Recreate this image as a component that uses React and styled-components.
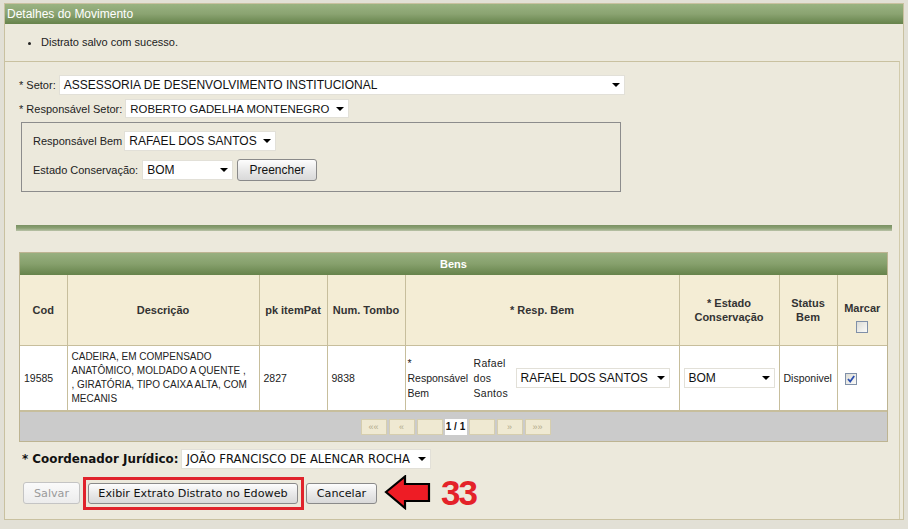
import React from "react";
import styled, { createGlobalStyle } from "styled-components";

const Global = createGlobalStyle`
  html, body { margin: 0; padding: 0; }
  body { background: #e2e0d6; font-family: "Liberation Sans", Arial, sans-serif; }
`;

const Page = styled.div`
  width: 908px;
  height: 529px;
  box-sizing: border-box;
  padding: 3px 4px 0 4px;
  overflow: hidden;
  background: #e2e0d6;
`;

const Dialog = styled.div`
  width: 900px;
  height: 517px;
  box-sizing: border-box;
  background: #ece9dc;
  border: 1px solid #c9c1a0;
  display: flex;
  flex-direction: column;
  overflow: hidden;
`;

const TitleBar = styled.div`
  flex: none;
  height: 20px;
  line-height: 20px;
  padding-left: 2px;
  color: #fff;
  font-size: 12px;
  background: linear-gradient(#9ab382, #8aa371 50%, #66834b);
`;

const Messages = styled.ul`
  flex: none;
  margin: 0;
  height: 37px;
  box-sizing: border-box;
  padding: 11px 0 0 36px;
  font-size: 11px;
  color: #222;
  li { line-height: 14px; }
`;

const Body = styled.div`
  flex: 1;
  border-top: 1px solid #c9c1a0;
  border-right: 1px solid #d2cbac;
  margin-right: 3px;
  padding: 13px 0 0 14px;
  display: flex;
  flex-direction: column;
  align-items: flex-start;
`;

const Row = styled.div`
  display: flex;
  align-items: center;
  gap: ${(p) => p.$gap ?? 3}px;
  margin-top: ${(p) => p.$mt ?? 0}px;
  margin-left: ${(p) => p.$ml ?? 0}px;
  font-size: 11px;
  color: #222;
`;

const SelectBox = styled.div`
  display: inline-flex;
  align-items: center;
  justify-content: space-between;
  width: ${(p) => p.$w}px;
  height: ${(p) => p.$h ?? 20}px;
  box-sizing: border-box;
  background: #fff;
  border: 1px solid #e2e0d8;
  padding: 0 4px 0 4px;
  font-family: ${(p) => p.$font ?? '"Liberation Sans", Arial, sans-serif'};
  font-size: ${(p) => p.$fs ?? 12}px;
  color: #111;
  white-space: nowrap;
`;

const Caret = styled.span`
  width: 0;
  height: 0;
  border-left: 4px solid transparent;
  border-right: 4px solid transparent;
  border-top: 4px solid #000;
  margin-left: 4px;
  flex: none;
`;

const Fieldset = styled.div`
  width: 600px;
  height: 70px;
  box-sizing: border-box;
  margin: 4px 0 0 2px;
  border: 1px solid #8c8c8c;
  padding: 8px 0 0 11px;
  display: flex;
  flex-direction: column;
  gap: 8px;
`;

const Button = styled.button`
  height: ${(p) => p.$h ?? 22}px;
  width: ${(p) => p.$w}px;
  box-sizing: border-box;
  border: 1px solid ${(p) => (p.disabled ? "#c4c4c4" : "#8a8a8a")};
  border-radius: 3px;
  background: ${(p) =>
    p.disabled ? "linear-gradient(#fafafa, #ececec)" : "linear-gradient(#fdfdfd, #e9e9e9 50%, #d9d9d9)"};
  color: ${(p) => (p.disabled ? "#9a9a9a" : "#111")};
  font-family: ${(p) => (p.$arial ? '"Liberation Sans", Arial, sans-serif' : '"DejaVu Sans", Verdana, sans-serif')};
  font-size: ${(p) => (p.$arial ? 12 : 11.2)}px;
  padding: 0;
  flex: none;
`;

const Separator = styled.div`
  width: 876px;
  height: 6px;
  margin: 33px 0 0 -3px;
  background: linear-gradient(#7a9163, #8aa072 50%, #b9c2a8);
`;

const TableBox = styled.div`
  width: 869px;
  margin: 21px 0 0 0;
  border: 1px solid #bdb492;
  box-sizing: border-box;
  background: #fff;
`;

const BarTitle = styled.div`
  height: 22px;
  line-height: 22px;
  text-align: center;
  color: #fff;
  font-weight: bold;
  font-size: 11px;
  background: linear-gradient(#98b080, #86a06c 50%, #66834b);
`;

const Table = styled.table`
  border-collapse: collapse;
  width: 100%;
  table-layout: fixed;
  font-size: 10.5px;
  color: #222;
`;

const Th = styled.th`
  background: #f4edd5;
  border: 1px solid #c7be9c;
  border-top: none;
  height: ${(p) => 70 - (p.$pt ?? 0)}px;
  padding: ${(p) => p.$pt ?? 0}px 3px 0 3px;
  vertical-align: ${(p) => (p.$pt ? "top" : "middle")};
  font-weight: bold;
  font-size: 11px;
  color: #333;
  line-height: 14px;
  &:first-child { border-left: none; }
  &:last-child { border-right: none; }
`;

const Td = styled.td`
  border: 1px solid #c7be9c;
  height: 64px;
  padding: 0 4px;
  text-align: left;
  vertical-align: middle;
  line-height: 14px;
  font-size: ${(p) => p.$fs ?? 10.5}px;
  white-space: ${(p) => (p.$nowrap ? "nowrap" : "normal")};
  &:first-child { border-left: none; }
  &:last-child { border-right: none; }
`;

const RespCell = styled.div`
  display: flex;
  align-items: center;
  gap: 4px;
  padding-left: 2px;
`;

const SmallText = styled.div`
  width: ${(p) => p.$w}px;
  line-height: 15px;
  font-size: 10.5px;
  letter-spacing: ${(p) => p.$ls ?? 0}px;
`;

const Check = styled.span`
  display: inline-block;
  width: 12px;
  height: 12px;
  box-sizing: border-box;
  border: 1px solid #8090a8;
  background: linear-gradient(135deg, #dcdcd6, #fbfbf8);
  vertical-align: middle;
  position: relative;
  margin-top: ${(p) => p.$mt ?? 0}px;
`;

const Pager = styled.div`
  height: 29px;
  background: #cbcbcb;
  border-top: 1px solid #c7be9c;
  display: flex;
  align-items: center;
  justify-content: center;
  gap: 2px;
  padding-left: 4px;
`;

const PageBtn = styled.span`
  width: ${(p) => p.$w ?? 26}px;
  height: 16px;
  box-sizing: border-box;
  background: ${(p) => (p.$current ? "#fff" : "#efe9d2")};
  border: 1px solid ${(p) => (p.$current ? "#fff" : "#d6ceae")};
  color: ${(p) => (p.$current ? "#111" : "#b2aa8a")};
  font-size: ${(p) => (p.$current ? 10 : 9)}px;
  font-weight: ${(p) => (p.$current ? "bold" : "normal")};
  display: flex;
  align-items: center;
  justify-content: center;
`;

const BoldLabel = styled.span`
  font-family: "DejaVu Sans", Verdana, sans-serif;
  font-weight: bold;
  font-size: 11.9px;
  color: #111;
`;

const Highlight = styled.div`
  width: 221px;
  height: 33px;
  box-sizing: border-box;
  border: 3px solid #e0232b;
  padding: 3px 0 0 2px;
  margin-left: 3px;
  flex: none;
`;

const StepNumber = styled.span`
  color: #e42229;
  font-weight: bold;
  font-size: 35px;
  letter-spacing: -2px;
  line-height: 30px;
  margin-left: 9px;
`;

function Select({ w, h, fs, font, children }) {
  return (
    <SelectBox $w={w} $h={h} $fs={fs} $font={font}>
      <span>{children}</span>
      <Caret />
    </SelectBox>
  );
}

export default function App() {
  return (
    <>
      <Global />
      <Page>
        <Dialog>
          <TitleBar>Detalhes do Movimento</TitleBar>
          <Messages>
            <li>Distrato salvo com sucesso.</li>
          </Messages>
          <Body>
            <Row>
              <span>* Setor:</span>
              <Select w={566}>ASSESSORIA DE DESENVOLVIMENTO INSTITUCIONAL</Select>
            </Row>
            <Row $mt={4} $gap={3}>
              <span>* Responsável Setor:</span>
              <Select w={224} h={19} fs={11.4}>
                ROBERTO GADELHA MONTENEGRO
              </Select>
            </Row>
            <Fieldset>
              <Row $gap={2}>
                <span>Responsável Bem</span>
                <Select w={152}>RAFAEL DOS SANTOS</Select>
              </Row>
              <Row $gap={4}>
                <span>Estado Conservação:</span>
                <Select w={91}>BOM</Select>
                <Button $w={80} $arial>
                  Preencher
                </Button>
              </Row>
            </Fieldset>
            <Separator />
            <TableBox>
              <BarTitle>Bens</BarTitle>
              <Table>
                <colgroup>
                  <col style={{ width: 47 }} />
                  <col style={{ width: 192 }} />
                  <col style={{ width: 68 }} />
                  <col style={{ width: 78 }} />
                  <col style={{ width: 274 }} />
                  <col style={{ width: 100 }} />
                  <col style={{ width: 58 }} />
                  <col />
                </colgroup>
                <thead>
                  <tr>
                    <Th>Cod</Th>
                    <Th>Descrição</Th>
                    <Th>pk itemPat</Th>
                    <Th>Num. Tombo</Th>
                    <Th>* Resp. Bem</Th>
                    <Th>
                      * Estado
                      <br />
                      Conservação
                    </Th>
                    <Th>
                      Status
                      <br />
                      Bem
                    </Th>
                    <Th $pt={26}>
                      Marcar
                      <br />
                      <Check $mt={6} />
                    </Th>
                  </tr>
                </thead>
                <tbody>
                  <tr>
                    <Td>19585</Td>
                    <Td $fs={10} $nowrap>
                      CADEIRA, EM COMPENSADO
                      <br />
                      ANATÔMICO, MOLDADO A QUENTE ,
                      <br />, GIRATÓRIA, TIPO CAIXA ALTA, COM
                      <br />
                      MECANIS
                    </Td>
                    <Td>2827</Td>
                    <Td>9838</Td>
                    <Td style={{ padding: 0 }}>
                      <RespCell>
                        <SmallText $w={62}>
                          *<br />
                          Responsável
                          <br />
                          Bem
                        </SmallText>
                        <SmallText $w={38} $ls={0.3}>
                          Rafael
                          <br />
                          dos
                          <br />
                          Santos
                        </SmallText>
                        <Select w={154}>RAFAEL DOS SANTOS</Select>
                      </RespCell>
                    </Td>
                    <Td>
                      <Select w={91}>BOM</Select>
                    </Td>
                    <Td>Disponivel</Td>
                    <Td style={{ paddingLeft: 7 }}>
                      <Check>
                        <svg width="10" height="10" viewBox="0 0 10 10" style={{ position: "absolute", left: 0, top: 0 }}>
                          <path d="M2 5 L4.2 7.5 L8.2 2" fill="none" stroke="#2b4fb0" strokeWidth="1.8" />
                        </svg>
                      </Check>
                    </Td>
                  </tr>
                </tbody>
              </Table>
              <Pager>
                <PageBtn>««</PageBtn>
                <PageBtn>«</PageBtn>
                <PageBtn />
                <PageBtn $current $w={22}>1 / 1</PageBtn>
                <PageBtn />
                <PageBtn>»</PageBtn>
                <PageBtn>»»</PageBtn>
              </Pager>
            </TableBox>
            <Row $mt={7} $ml={3} $gap={3}>
              <BoldLabel>* Coordenador Jurídico:</BoldLabel>
              <Select w={250} fs={11.6} font={'"DejaVu Sans", Verdana, sans-serif'}>
                JOÃO FRANCISCO DE ALENCAR ROCHA
              </Select>
            </Row>
            <Row $mt={6} $ml={4} $gap={0}>
              <Button $w={57} disabled>
                Salvar
              </Button>
              <Highlight>
                <Button $w={210} $h={21}>
                  Exibir Extrato Distrato no Edoweb
                </Button>
              </Highlight>
              <Button $w={71} $h={21} style={{ marginLeft: 2 }}>
                Cancelar
              </Button>
              <svg width="48" height="36" viewBox="0 0 48 36" style={{ marginLeft: 7 }}>
                <polygon
                  points="2,17 21,1.5 21,9 45,9 45,26 21,26 21,33"
                  fill="#ee1c25"
                  stroke="#000"
                  strokeWidth="2.2"
                  strokeLinejoin="miter"
                />
              </svg>
              <StepNumber>33</StepNumber>
            </Row>
          </Body>
        </Dialog>
      </Page>
    </>
  );
}
